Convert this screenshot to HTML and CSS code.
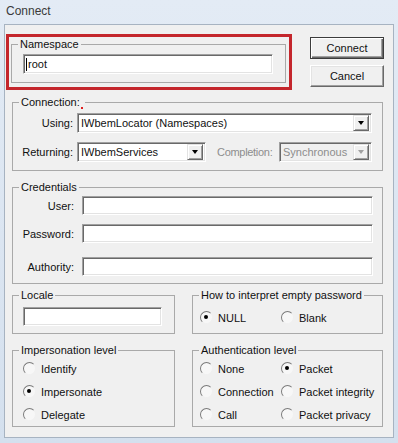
FILE: index.html
```html
<!DOCTYPE html>
<html lang="en">
<head>
  <meta charset="UTF-8">
  <meta name="viewport" content="width=device-width, initial-scale=1.0">
  <title>Connect</title>
  <link rel="stylesheet" href="styles.css">
</head>
<body>
  <div class="window">
    <div class="titlebar">
      <span class="titlebar__text">Connect</span>
    </div>

    <div class="client">
      <div class="top-row">
        <div class="highlight">
          <fieldset class="group">
            <legend>Namespace</legend>
            <div class="group__body group__body--namespace">
              <div class="textbox textbox--namespace"><span class="caret"></span>root</div>
            </div>
          </fieldset>
        </div>
        <div class="buttons">
          <button class="btn btn--default">Connect</button>
          <button class="btn">Cancel</button>
        </div>
      </div>

      <fieldset class="group group--connection">
        <legend>Connection:<span class="marker"></span></legend>
        <div class="group__body group__body--connection">
          <div class="field-row">
            <span class="field-label field-label--conn">Using:</span>
            <div class="combo combo--using">
              <span class="combo__value">IWbemLocator (Namespaces)</span>
              <span class="combo__btn"></span>
            </div>
          </div>
          <div class="field-row">
            <span class="field-label field-label--conn">Returning:</span>
            <div class="combo combo--returning">
              <span class="combo__value">IWbemServices</span>
              <span class="combo__btn"></span>
            </div>
            <span class="field-label field-label--disabled">Completion:</span>
            <div class="combo combo--completion combo--disabled">
              <span class="combo__value">Synchronous</span>
              <span class="combo__btn"></span>
            </div>
          </div>
        </div>
      </fieldset>

      <fieldset class="group group--credentials">
        <legend>Credentials</legend>
        <div class="group__body group__body--credentials">
          <div class="field-row field-row--user">
            <span class="field-label field-label--cred">User:</span>
            <div class="textbox textbox--wide"></div>
          </div>
          <div class="field-row field-row--password">
            <span class="field-label field-label--cred">Password:</span>
            <div class="textbox textbox--wide"></div>
          </div>
          <div class="field-row field-row--authority">
            <span class="field-label field-label--cred">Authority:</span>
            <div class="textbox textbox--wide"></div>
          </div>
        </div>
      </fieldset>

      <div class="bottom-grid">
        <fieldset class="group">
          <legend>Locale</legend>
          <div class="group__body group__body--locale">
            <div class="textbox textbox--locale"></div>
          </div>
        </fieldset>

        <fieldset class="group">
          <legend>How to interpret empty password</legend>
          <div class="group__body group__body--password-mode">
            <div class="radio-grid">
              <span class="radio-option"><span class="radio radio--checked"></span>NULL</span>
              <span class="radio-option"><span class="radio"></span>Blank</span>
            </div>
          </div>
        </fieldset>

        <fieldset class="group">
          <legend>Impersonation level</legend>
          <div class="group__body group__body--impersonation">
            <div class="radio-list">
              <span class="radio-option"><span class="radio"></span>Identify</span>
              <span class="radio-option"><span class="radio radio--checked"></span>Impersonate</span>
              <span class="radio-option"><span class="radio"></span>Delegate</span>
            </div>
          </div>
        </fieldset>

        <fieldset class="group">
          <legend>Authentication level</legend>
          <div class="group__body group__body--auth">
            <div class="radio-grid radio-grid--auth">
              <span class="radio-option"><span class="radio"></span>None</span>
              <span class="radio-option"><span class="radio radio--checked"></span>Packet</span>
              <span class="radio-option"><span class="radio"></span>Connection</span>
              <span class="radio-option"><span class="radio"></span>Packet integrity</span>
              <span class="radio-option"><span class="radio"></span>Call</span>
              <span class="radio-option"><span class="radio"></span>Packet privacy</span>
            </div>
          </div>
        </fieldset>
      </div>
    </div>
  </div>
</body>
</html>
```

FILE: styles.css
```css
*,
*::after,
*::before {
  padding: 0;
  margin: 0;
  box-sizing: border-box;
}

:root {
  --face: #f0f0f0;
  --shadow: #a0a0a0;
  --dark-shadow: #696969;
  --light: #e3e3e3;
  --group-line: #a9a9a9;
  --highlight-red: #c4262c;
}

body {
  background-color: #dbe6f2;
  font-family: "Liberation Sans", Arial, sans-serif;
  font-size: 11px;
  color: #111;
}

.window {
  display: flex;
  flex-direction: column;
  width: 398px;
  height: 443px;
  background-image: linear-gradient(to bottom, #e3ebf5, #d4e0ee);
}

.titlebar {
  display: flex;
  align-items: center;
  height: 24px;
  padding-left: 6px;
  padding-bottom: 2px;
}

.titlebar__text {
  font-size: 12px;
  color: #3a3a3a;
}

.client {
  height: 414px;
  margin: 0 4px 0 4px;
  padding: 9px 10px 0 7px;
  background-color: var(--face);
  border: 1px solid #a7b3c1;
}

/* top row: highlighted namespace + buttons */
.top-row {
  display: flex;
  justify-content: space-between;
  align-items: flex-start;
}

.highlight {
  width: 286px;
  margin-left: -6px;
  padding: 1px 3px 4px 2px;
  border: 3px solid var(--highlight-red);
}

.buttons {
  display: flex;
  flex-direction: column;
  gap: 6px;
  width: 74px;
  margin-top: 3px;
  margin-right: -1px;
}

.btn {
  height: 22px;
  font-family: inherit;
  font-size: 11px;
  color: #111;
  background-color: var(--face);
  border: 1px solid;
  border-color: #fff var(--dark-shadow) var(--dark-shadow) #fff;
  box-shadow: inset -1px -1px 0 var(--shadow), inset 1px 1px 0 var(--light);
}

.btn--default {
  border-color: #3c3c3c;
  box-shadow: inset 1px 1px 0 #fff, inset -1px -1px 0 var(--dark-shadow), inset -2px -2px 0 var(--shadow);
}

/* group boxes */
.group {
  min-width: 0;
  padding: 0;
  border: 1px solid var(--group-line);
}

.group legend {
  margin-left: 6px;
  padding: 0 2px;
  line-height: 13px;
}

.group--connection {
  margin-top: 6px;
}

.group--credentials {
  margin-top: 10px;
}

.marker {
  display: inline-block;
  width: 2px;
  height: 2px;
  margin-left: 1px;
  vertical-align: -3px;
  background-color: #e02020;
}

.group__body--namespace {
  padding: 3px 0 8px 11px;
}

.group__body--connection {
  display: flex;
  flex-direction: column;
  gap: 9px;
  padding: 4px 10px 8px 0;
}

.group__body--credentials {
  padding: 2px 9px 7px 0;
}

.group__body--locale {
  padding: 5px 0 7px 10px;
}

.group__body--password-mode {
  padding: 9px 0 0 7px;
}

.group__body--impersonation {
  padding: 5px 0 5px 10px;
}

.group__body--auth {
  padding: 5px 0 5px 7px;
}

/* rows and labels */
.field-row {
  display: flex;
  align-items: center;
}

.field-row--password {
  margin-top: 9px;
}

.field-row--authority {
  margin-top: 14px;
}

.field-label {
  flex-shrink: 0;
  text-align: right;
  white-space: nowrap;
}

.field-label--conn {
  width: 60px;
  margin-right: 4px;
}

.field-label--cred {
  width: 61px;
  margin-right: 8px;
}

.field-label--disabled {
  margin-left: 11px;
  color: #8d8d8d;
  text-align: left;
  letter-spacing: -0.3px;
}

/* text boxes */
.textbox {
  display: flex;
  align-items: center;
  height: 19px;
  padding-left: 2px;
  background-color: #fff;
  border: 1px solid;
  border-color: var(--shadow) #fff #fff var(--shadow);
  box-shadow: inset 1px 1px 0 var(--dark-shadow), inset -1px -1px 0 var(--light);
}

.textbox--namespace {
  width: 250px;
  height: 20px;
}

.textbox--wide {
  flex: 1;
}

.textbox--locale {
  width: 139px;
}

.caret {
  width: 1px;
  height: 13px;
  margin-right: 1px;
  background-color: #000;
}

/* combo boxes */
.combo {
  display: flex;
  align-items: center;
  height: 20px;
  padding: 2px 2px 2px 3px;
  background-color: #fff;
  border: 1px solid;
  border-color: var(--shadow) #fff #fff var(--shadow);
  box-shadow: inset 1px 1px 0 var(--dark-shadow), inset -1px -1px 0 var(--light);
}

.combo--using {
  width: 295px;
}

.combo--returning {
  width: 129px;
}

.combo--completion {
  width: 93px;
  margin-left: auto;
}

.combo--disabled {
  background-color: var(--face);
  color: #8d8d8d;
}

.combo__value {
  flex: 1;
  white-space: nowrap;
  overflow: hidden;
}

.combo__btn {
  position: relative;
  width: 16px;
  height: 16px;
  background-color: var(--face);
  border: 1px solid;
  border-color: var(--light) var(--dark-shadow) var(--dark-shadow) var(--light);
  box-shadow: inset 1px 1px 0 #fff, inset -1px -1px 0 var(--shadow);
}

.combo__btn::after {
  content: "";
  position: absolute;
  left: 4px;
  top: 5px;
  border-left: 3.5px solid transparent;
  border-right: 3.5px solid transparent;
  border-top: 4px solid #000;
}

.combo--disabled .combo__btn::after {
  border-top-color: #a0a0a0;
}

/* bottom grid of small groups */
.bottom-grid {
  display: grid;
  grid-template-columns: 163px 1fr;
  column-gap: 17px;
  row-gap: 10px;
  margin-top: 5px;
}

.radio-grid {
  display: grid;
  grid-template-columns: 81px auto;
  row-gap: 10px;
}

.radio-list {
  display: flex;
  flex-direction: column;
  gap: 10px;
}

.radio-option {
  display: flex;
  align-items: center;
  gap: 5px;
  height: 13px;
  white-space: nowrap;
}

.radio {
  position: relative;
  flex-shrink: 0;
  width: 13px;
  height: 13px;
  border-radius: 50%;
  background-color: #f7f7f7;
  border: 1.5px solid;
  border-color: #7a7a7a var(--face) var(--face) #7a7a7a;
}

.radio--checked::after {
  content: "";
  position: absolute;
  left: 3px;
  top: 3px;
  width: 4px;
  height: 4px;
  border-radius: 50%;
  background-color: #000;
}
```
